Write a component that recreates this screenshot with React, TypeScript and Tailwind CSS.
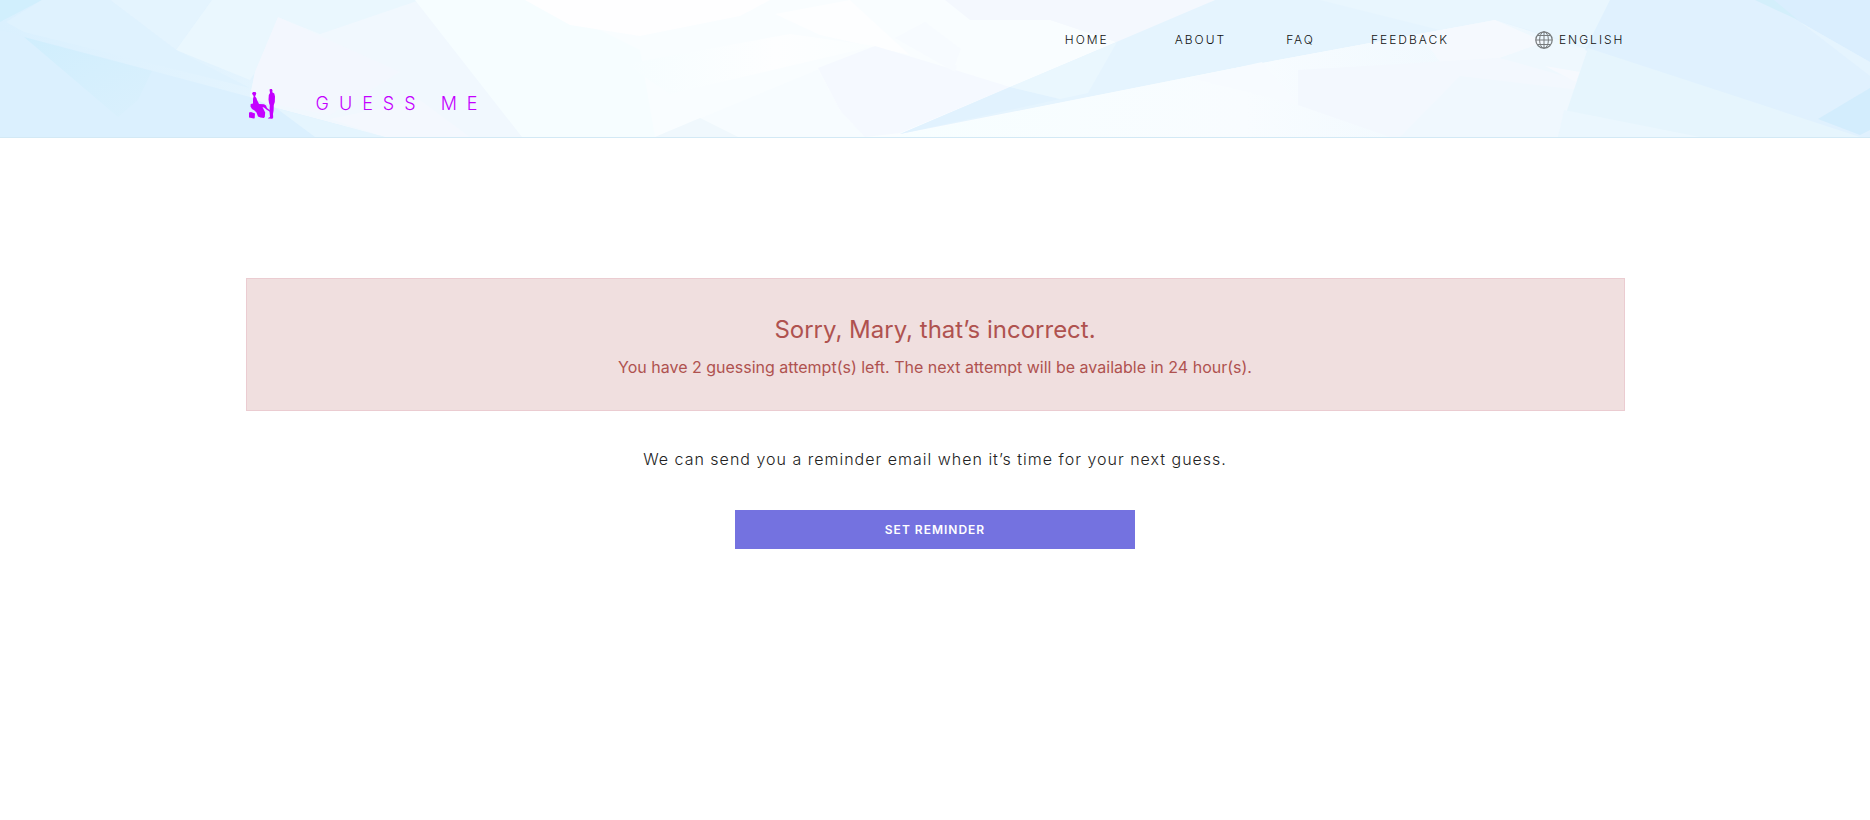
const navItems = [
  { label: "Home", href: "#home", gap: "" },
  { label: "About", href: "#about", gap: "ml-[66px]" },
  { label: "FAQ", href: "#faq", gap: "ml-15" },
  { label: "Feedback", href: "#feedback", gap: "ml-14" },
];

function HeaderBackground() {
  return (
    <svg
      className="absolute inset-0 h-full w-full"
      viewBox="0 0 1870 137"
      preserveAspectRatio="none"
      aria-hidden="true"
    >
      <defs>
        <linearGradient id="leftFade" x1="0" x2="1" y1="0" y2="0">
          <stop offset="0" stopColor="#daf0fe" />
          <stop offset="1" stopColor="#eef8fe" />
        </linearGradient>
        <linearGradient id="cyanFade" x1="0" x2="1" y1="0" y2="1">
          <stop offset="0" stopColor="#d0eefd" />
          <stop offset="1" stopColor="#daf0fd" />
        </linearGradient>
        <linearGradient id="whiteFade" x1="0" x2="1" y1="0" y2="0">
          <stop offset="0" stopColor="#f6fdff" />
          <stop offset="0.6" stopColor="#fdfeff" />
          <stop offset="1" stopColor="#fafeff" />
        </linearGradient>
        <linearGradient id="paleFade" x1="0" x2="1" y1="0" y2="0">
          <stop offset="0" stopColor="#f7feff" />
          <stop offset="0.5" stopColor="#f8fcff" />
          <stop offset="1" stopColor="#ecf7fe" />
        </linearGradient>
      </defs>
      <rect width="1870" height="137" fill="#f9fdff" />

      {/* left side */}
      <polygon points="0,0 420,0 530,137 0,137" fill="url(#leftFade)" />
      <polygon points="0,0 42,0 0,22" fill="#d1effd" />
      <polygon points="110,0 212,0 176,50" fill="#e4f4fe" />
      <polygon points="176,50 212,0 420,0 320,34 278,17 255,72 250,80" fill="#eaf7fe" />
      <polygon points="6,22 42,0 110,0 176,50 250,88 24,32" fill="#dff2fe" />
      <polygon points="0,30 250,97 380,137 0,137" fill="#dbf0fe" />
      <polygon points="24,37 152,71 138,100 118,117" fill="url(#cyanFade)" />
      <polygon points="278,17 320,34 420,0 530,137 385,137 276,108 250,97 255,72" fill="#f1f8fe" />
      <polygon points="278,17 400,72 330,115 276,105 250,97 255,72" fill="#f3f7fe" />
      <polygon points="330,119 420,100 470,137 385,137" fill="#f4f8fe" />
      <polygon points="276,108 385,137 315,137" fill="#e5f5fe" />
      <polygon points="415,0 540,0 640,50 655,137 522,137" fill="#f6fdff" />

      {/* middle */}
      <polygon points="525,0 770,0 740,16 640,36 570,25" fill="#fefeff" />
      <polygon points="775,14 850,0 910,55 820,35" fill="#fdfeff" />
      <polygon points="626,64 790,34 875,46 670,94" fill="url(#whiteFade)" />
      <polygon points="655,137 875,46 818,70 840,110 865,137" fill="#f7fcff" />
      <polygon points="655,137 700,118 738,137" fill="#f0f8fd" />
      <polygon points="818,68 875,46 955,70 1010,87 900,133 865,137 840,110" fill="#f5f9ff" />
      <polygon points="895,38 925,22 962,50 955,72" fill="#f7fbff" />
      <polygon points="945,0 1215,0 1125,45 1050,20 970,20" fill="#f4f8fe" />
      <polygon points="970,24 1092,50 1010,86 955,65" fill="#f9fdff" />

      {/* long ray */}
      <polygon points="900,134 1215,0 1870,0 1870,137 1590,137 1495,20 1230,69" fill="#e5f4fe" />
      <polygon points="900,134 1010,87 1060,99" fill="#e1f2fe" />
      <polygon points="1010,87 1117,42 1088,93 1060,99" fill="#eaf7fe" />
      <polygon points="1320,0 1610,0 1590,48 1495,20 1440,30" fill="#e9f6fe" />

      {/* right side */}
      <polygon points="900,135 1230,69 1495,20 1590,50 1560,137 900,137" fill="url(#paleFade)" />
      <polygon points="1190,78 1262,62 1298,105 1280,100" fill="#f7fbff" />
      <polygon points="1420,34 1495,20 1545,42 1500,58 1440,62" fill="#f5f9fe" />
      <polygon points="1298,70 1500,58 1580,76 1560,137 1390,137 1298,105" fill="#f3f8fe" />
      <polygon points="1400,137 1460,76 1580,90 1560,137" fill="#f0f8fe" />
      <polygon points="1500,58 1545,42 1590,50 1578,80" fill="#eff8fe" />
      <polygon points="1545,66 1580,72 1576,82" fill="#f6f9fe" />
      <polygon points="1610,0 1870,0 1870,137 1845,137 1585,50" fill="#e0f1fe" />
      <polygon points="1588,48 1860,137 1558,137" fill="#e6f5fd" />
      <polygon points="1564,110 1700,137 1558,137" fill="#ebf7fe" />
      <polygon points="1770,0 1870,0 1870,62 1800,22" fill="#daeefe" />
      <polygon points="1755,0 1774,0 1798,20" fill="#d3effb" />
      <polygon points="1800,22 1870,62 1870,76" fill="#e5f4fe" />
      <polygon points="1870,88 1818,119 1860,135 1870,130" fill="#d3edfd" />
    </svg>
  );
}

function LogoMark() {
  return (
    <svg className="h-8 w-7" viewBox="0 0 28 32" fill="#c400ff" aria-hidden="true">
      {/* seated figure */}
      <path d="M4 5.500 5 4h2.500l.8 1.500L7.500 7.500 7 8.300l1.500 2L9 12l1.200 2.200L11 16l5 .2 2 1.300 1 2.500 3.500 2.700-.2 1.300-3.600-2.200-2.700-2.300-1.500-.5 1.500 3 1.200 2.500-.4 4.500-1 1-3.300-.4-2.500-1.200-1.500-4-2-2-2.500-1.300L2.500 18.500l.2-2.500 2.300-.6V11l.7-3L5 7.200z" />
      <path d="M1 24.600 3 24l4 1.500-.3 4.700-1 .3L1 29.500z" />
      {/* standing figure */}
      <path d="M21.500 1.500 22.500 1h1.300l.7 1.200-.2 2 2 1.300.7 3-.2 5.500-1 3-.2 5.500-.6 3.500.2 3.500-.8 1.200h-1.200L21.500 30.500l-1.300.2.3-1 1.500-.7-.5-5.500.3-6-.8-2.500-.5-3.500.3-4.500L22 5z" />
    </svg>
  );
}

function GlobeIcon() {
  return (
    <svg
      className="size-[18px]"
      viewBox="0 0 18 18"
      fill="none"
      stroke="#777b7d"
      aria-hidden="true"
    >
      <circle cx="9" cy="9" r="8.2" strokeWidth="1.2" />
      <ellipse cx="9" cy="9" rx="4.4" ry="8.2" />
      <path d="M9 .8v16.4M.8 9h16.4M2.4 4.500h13.2M2.4 13.500h13.2" />
    </svg>
  );
}

function Header() {
  return (
    <header className="relative border-b border-[#d3e9f5]">
      <HeaderBackground />
      <div className="relative mx-auto max-w-[1379px] pb-[17px]">
        <nav className="flex items-center justify-end pt-[31px] text-xs leading-4 font-light tracking-[2px] text-[#111] uppercase">
          {navItems.map((item) => (
            <a key={item.label} href={item.href} className={item.gap}>
              {item.label}
            </a>
          ))}
          <button type="button" className="ml-[86px] flex items-center gap-[6px] uppercase">
            <GlobeIcon />
            English
          </button>
        </nav>
        <a href="#home" className="mt-[39px] flex w-fit items-center gap-10 pl-[2px] text-lg leading-8 font-light tracking-[10px] text-[#c400ff]">
          <LogoMark />
          GUESS ME
        </a>
      </div>
    </header>
  );
}

export default function App() {
  return (
    <div className="min-h-screen bg-white font-['Inter',sans-serif] font-light">
      <Header />
      <main className="mx-auto max-w-[1379px] pt-[140px] text-center">
        <div role="alert" className="border border-[#ebccd1] bg-[#f0dfdf] pt-8 pb-[31px] font-normal text-[#af524f]">
          <h1 className="text-2xl leading-[38px]">Sorry, Mary, that’s incorrect.</h1>
          <p className="mt-[6px] text-base leading-6">
            You have 2 guessing attempt(s) left. The next attempt will be available in 24 hour(s).
          </p>
        </div>
        <p className="mt-9 text-base leading-6 tracking-[1px] text-[#222]">
          We can send you a reminder email when it’s time for your next guess.
        </p>
        <button
          type="button"
          className="mt-[39px] h-[39px] w-[400px] bg-[#7472e0] text-xs font-semibold tracking-[1px] text-white"
        >
          SET REMINDER
        </button>
      </main>
    </div>
  );
}
